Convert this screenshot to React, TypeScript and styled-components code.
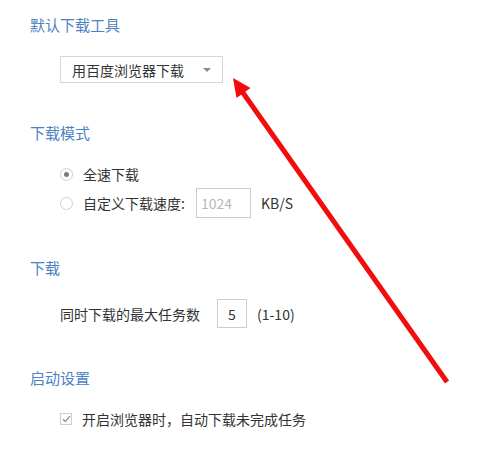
import * as React from "react";
import styled, { createGlobalStyle } from "styled-components";

const GlobalStyle = createGlobalStyle`
  html, body {
    margin: 0;
    padding: 0;
    background: #ffffff;
  }
  body {
    font-family: "Noto Sans CJK SC", "Noto Sans", sans-serif;
    color: #333333;
  }
`;

const Page = styled.div`
  position: relative;
  width: 493px;
  height: 457px;
  box-sizing: border-box;
  padding: 15px 0 0 30px;
  overflow: hidden;
`;

const Section = styled.section`
  & + & {
    margin-top: 40px;
  }
`;

const Heading = styled.h3`
  margin: 0;
  font-size: 15px;
  font-weight: 400;
  line-height: 20px;
  color: #4d82c3;
`;

const Body = styled.div<{ $gap?: number }>`
  margin-top: 21px;
  padding-left: 30px;
  display: flex;
  flex-direction: column;
  gap: ${(p) => p.$gap ?? 0}px;
`;

const Select = styled.div`
  width: 163px;
  height: 27px;
  box-sizing: border-box;
  border: 1px solid #d6d6d6;
  display: flex;
  align-items: center;
  justify-content: space-between;
  padding: 0 11px 0 11px;
  font-size: 14px;
  color: #333;
`;

const Caret = styled.span`
  width: 0;
  height: 0;
  border-left: 4px solid transparent;
  border-right: 4px solid transparent;
  border-top: 4px solid #8a8a8a;
`;

const Row = styled.label<{ $h?: number }>`
  display: flex;
  align-items: center;
  height: ${(p) => p.$h ?? 20}px;
  font-size: 14px;
  color: #333;
`;

const Radio = styled.span<{ $on?: boolean }>`
  width: 13px;
  height: 13px;
  box-sizing: border-box;
  border: 1px solid #cfcfcf;
  border-radius: 50%;
  margin-right: 10px;
  display: flex;
  align-items: center;
  justify-content: center;
  &::after {
    content: "";
    display: ${(p) => (p.$on ? "block" : "none")};
    width: 5px;
    height: 5px;
    border-radius: 50%;
    background: #7a7a7a;
  }
`;

const Check = styled.span`
  width: 12px;
  height: 12px;
  box-sizing: border-box;
  border: 1px solid #cfcfcf;
  margin-right: 10px;
  display: flex;
  align-items: center;
  justify-content: center;
`;

const Field = styled.span<{ $w: number; $h: number; $muted?: boolean; $center?: boolean }>`
  width: ${(p) => p.$w}px;
  height: ${(p) => p.$h}px;
  box-sizing: border-box;
  border: 1px solid #cccccc;
  display: flex;
  align-items: center;
  justify-content: ${(p) => (p.$center ? "center" : "flex-start")};
  padding-left: ${(p) => (p.$center ? 0 : 4)}px;
  color: ${(p) => (p.$muted ? "#b8b8b8" : "#333")};
  font-size: 14px;
`;

const Label = styled.span<{ $mr?: number }>`
  margin-right: ${(p) => p.$mr ?? 0}px;
  white-space: nowrap;
`;

const ArrowLayer = styled.svg`
  position: absolute;
  left: 0;
  top: 0;
  pointer-events: none;
`;

export default function App() {
  return (
    <>
      <GlobalStyle />
      <Page>
        <Section>
          <Heading>默认下载工具</Heading>
          <Body>
            <Select>
              <span>用百度浏览器下载</span>
              <Caret />
            </Select>
          </Body>
        </Section>

        <Section>
          <Heading>下载模式</Heading>
          <Body $gap={4}>
            <Row>
              <Radio $on />
              <Label>全速下载</Label>
            </Row>
            <Row $h={30}>
              <Radio />
              <Label $mr={11}>自定义下载速度:</Label>
              <Field $w={55} $h={30} $muted>1024</Field>
              <Label style={{ marginLeft: 10 }}>KB/S</Label>
            </Row>
          </Body>
        </Section>

        <Section>
          <Heading>下载</Heading>
          <Body>
            <Row $h={29}>
              <Label $mr={17}>同时下载的最大任务数</Label>
              <Field $w={30} $h={29} $center>5</Field>
              <Label style={{ marginLeft: 10 }}>(1-10)</Label>
            </Row>
          </Body>
        </Section>

        <Section>
          <Heading>启动设置</Heading>
          <Body>
            <Row>
              <Check>
                <svg width="9" height="8" viewBox="0 0 9 8">
                  <path d="M1 4.2 L3.4 6.5 L8 1.2" fill="none" stroke="#8a8a8a" strokeWidth="1.2" />
                </svg>
              </Check>
              <Label>开启浏览器时，自动下载未完成任务</Label>
            </Row>
          </Body>
        </Section>

        <ArrowLayer width="493" height="457" viewBox="0 0 493 457">
          <line x1="447" y1="382" x2="241" y2="90" stroke="#f20d0d" strokeWidth="5" strokeLinecap="butt" />
          <polygon points="233,78 236.5,98 250.5,88" fill="#f20d0d" />
        </ArrowLayer>
      </Page>
    </>
  );
}
